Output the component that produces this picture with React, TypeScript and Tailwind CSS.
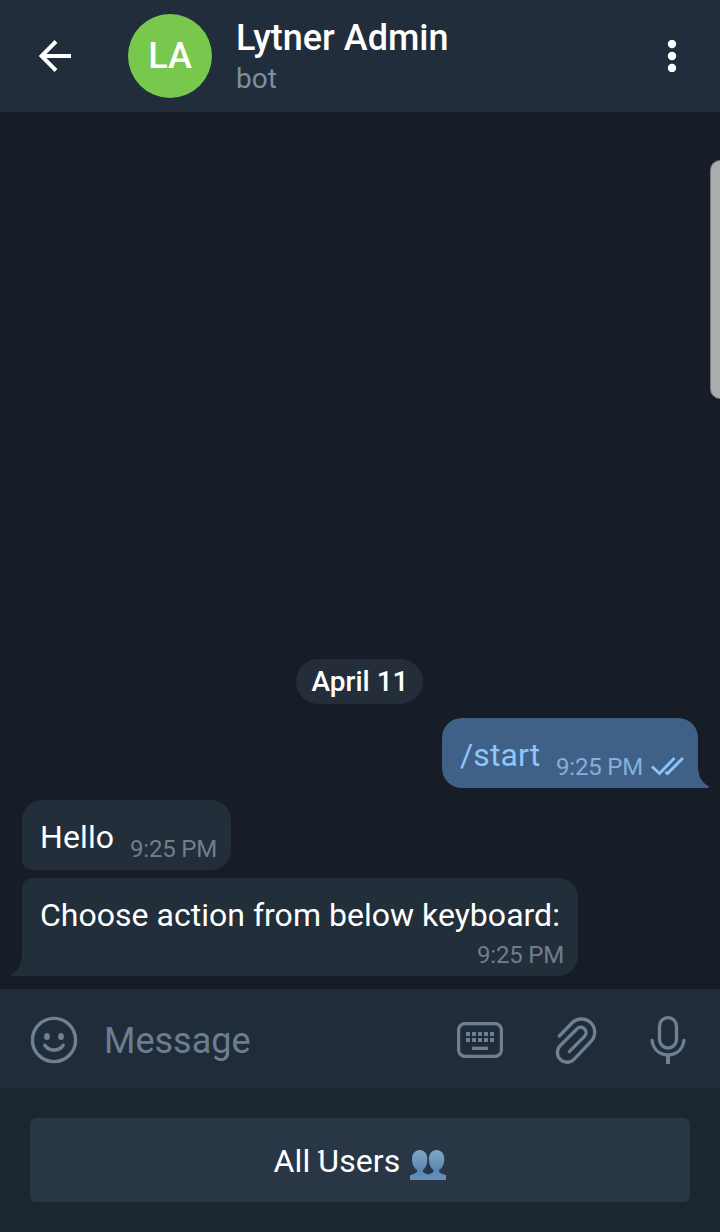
import React from "react";

function BackIcon() {
  return (
    <svg className="block h-8 w-8" viewBox="0 0 32 32" fill="none" stroke="#fff" strokeWidth="4">
      <path d="M32 16H3M17 1.5L2.5 16L17 30.5" />
    </svg>
  );
}

function SmileIcon() {
  return (
    <svg className="-mt-px block h-12 w-12 shrink-0" viewBox="0 0 48 48" fill="none" stroke="#6f8094" strokeWidth="3.4">
      <circle cx="24" cy="24" r="21.6" />
      <path d="M14.8 29.2C19.2 35.6 28.8 35.6 33.2 29.2" strokeLinecap="round" />
      <ellipse cx="17" cy="20.5" rx="2.9" ry="3.5" fill="#6f8094" stroke="none" />
      <ellipse cx="31" cy="20.5" rx="2.9" ry="3.5" fill="#6f8094" stroke="none" />
    </svg>
  );
}

function KeyboardIcon() {
  const cols = [9, 15, 21, 27, 33];
  return (
    <svg className="block h-9 w-[46px] shrink-0" viewBox="0 0 46 36" fill="#6f8094">
      <rect x="1.6" y="1.6" width="42.8" height="32.8" rx="6.5" fill="none" stroke="#6f8094" strokeWidth="3.2" />
      {cols.map((x) => (
        <g key={x}>
          <rect x={x} y="10" width="4" height="4" />
          <rect x={x} y="16" width="4" height="4" />
        </g>
      ))}
      <rect x="15" y="24.7" width="16" height="3.3" />
    </svg>
  );
}

function ClipIcon() {
  return (
    <svg className="-mt-px block h-12 w-[42px] shrink-0" viewBox="0 0 126 144" fill="none" stroke="#6f8094" strokeWidth="10">
      <path d="M13 60L51 21A39 39 0 0 1 108 76L57 130A29 29 0 0 1 15.5 89L66 38.5A15.5 15.5 0 0 1 88.500 61L43 107" strokeLinecap="round" />
    </svg>
  );
}

function MicIcon() {
  return (
    <svg className="block h-12 w-9 shrink-0" viewBox="0 0 36 48" fill="none" stroke="#6f8094" strokeWidth="3.3">
      <rect x="9.5" y="1.7" width="17" height="30.300" rx="8.5" />
      <path d="M2 24.5C3.5 34 10 38.8 18 38.8S32.500 34 34 24.500" strokeLinecap="round" />
      <path d="M18 39V48" strokeWidth="4" />
    </svg>
  );
}

function PeopleIcon() {
  const bust =
    "M0 30V25.500C3 23.800 7 23.500 7.500 20.500C4 18 2 14.500 2 9C2 3.500 5.200 0 9.700 0S17.400 3.500 17.400 9C17.400 14.500 15.500 18 12.500 20.500C13 23.500 17 23.800 21 25.500V30Z";
  return (
    <svg className="block h-[30px] w-9" viewBox="0 0 36 30">
      <defs>
        <linearGradient id="bust" x1="0" y1="0" x2="0" y2="1">
          <stop offset="0" stopColor="#82a8c8" />
          <stop offset="0.65" stopColor="#5b88b2" />
          <stop offset="1" stopColor="#6590bb" />
        </linearGradient>
      </defs>
      <path d={bust} fill="url(#bust)" />
      <path d={bust} fill="url(#bust)" transform="translate(36.300 0) scale(-1 1)" />
    </svg>
  );
}

function Time({ className }: { className: string }) {
  return <span className={`whitespace-nowrap text-[24px] leading-7 tracking-[-0.2px] ${className}`}>9:25 PM</span>;
}

export default function App() {
  return (
    <div className="relative flex h-[1232px] w-[720px] flex-col overflow-hidden bg-[#161d26] font-[Roboto,sans-serif] text-white">
      <header className="flex h-28 shrink-0 items-center bg-[#212d3a] pl-[39px] pr-[42px]">
        <BackIcon />
        <div className="ml-[57px] flex h-[84px] w-[84px] items-center justify-center rounded-full bg-[#77c84d] text-[36px] font-medium leading-10">
          LA
        </div>
        <div className="ml-6 flex flex-1 flex-col pt-0.5">
          <h1 className="text-[36px] font-medium leading-[42px]">Lytner Admin</h1>
          <p className="pt-px text-[28px] leading-[37px] text-[#7f8e9d]">bot</p>
        </div>
        <svg className="block h-8 w-3" viewBox="0 0 12 32" fill="#fff">
          <circle cx="6" cy="4" r="4.200" />
          <circle cx="6" cy="16" r="4.200" />
          <circle cx="6" cy="28" r="4.200" />
        </svg>
      </header>

      <main className="flex flex-1 flex-col justify-end pb-[13px]">
        <div className="mb-3.5 mr-px flex h-[45px] w-[127px] items-center justify-center self-center rounded-full bg-[#242e3a] pl-px text-[28px] font-medium leading-8">
          April 11
        </div>

        <div className="relative mr-[22px] flex h-[70px] w-64 justify-between self-end rounded-[20px] rounded-br-none bg-[#406187] pl-[18px] pr-3.5">
          <span className="pt-[19px] text-[32px] leading-9 tracking-[0.1px] text-[#8fc5fa]">/start</span>
          <div className="flex pt-[35px]">
            <Time className="text-[#83afd9]" />
            <svg className="ml-2 mt-[3px] block h-5 w-[33px]" viewBox="0 0 33 20" fill="none" stroke="#89c4fa" strokeWidth="2.900">
              <path d="M1 10.500L8.500 17.500L23.500 2M14.500 16L16.500 17.500L32 2" />
            </svg>
          </div>
          <svg className="absolute bottom-0 left-full h-5 w-[11px]" viewBox="0 0 11 20">
            <path d="M0 0C.4 8 4 15 10.500 18Q11.500 20 9 20H0Z" fill="#406187" />
          </svg>
        </div>

        <div className="ml-[22px] mt-3 flex h-[70px] w-[209px] justify-between rounded-[20px] rounded-bl-[10px] bg-[#222e3a] pl-[18px] pr-3.5">
          <span className="pt-[19px] text-[32px] leading-9 tracking-[0.1px]">Hello</span>
          <Time className="pt-[35px] text-[#707e8c]" />
        </div>

        <div className="relative ml-[22px] mt-2 flex h-[98px] w-[556px] flex-col rounded-[20px] rounded-bl-none rounded-tl-[10px] bg-[#222e3a] pl-[18px] pr-3.5 pt-[19px]">
          <span className="whitespace-nowrap text-[32px] leading-9 tracking-[0.02px]">Choose action from below keyboard:</span>
          <Time className="mt-2 self-end text-[#707e8c]" />
          <svg className="absolute bottom-0 right-full h-5 w-[11px]" viewBox="0 0 11 20">
            <path d="M11 0C10.600 8 7 15 .5 18Q-.5 20 2 20H11Z" fill="#222e3a" />
          </svg>
        </div>
      </main>

      <div className="flex h-[99px] shrink-0 items-center bg-[#212c3a] pb-px pl-[30px] pr-[34px] pt-1">
        <SmileIcon />
        <span className="ml-[26px] flex-1 pt-0.5 text-[36px] leading-10 text-[#6b7e91]">Message</span>
        <KeyboardIcon />
        <div className="ml-[52px]">
          <ClipIcon />
        </div>
        <div className="ml-[53px]">
          <MicIcon />
        </div>
      </div>

      <footer className="h-36 shrink-0 bg-[#1c2631] p-[30px]">
        <button className="flex h-[84px] w-full items-center justify-center rounded-md bg-[#293645] pt-0.5 text-[32px] leading-9 tracking-[0.1px]">
          <span className="relative">
            All Users
            <span className="absolute left-[44px] top-2 h-0.5 w-[5px] bg-white/80" />
          </span>
          <span className="ml-2.5 mt-2">
            <PeopleIcon />
          </span>
        </button>
      </footer>

      <div className="absolute left-[710px] top-40 h-[239px] w-5 rounded-[12px] border border-[#777b7d] bg-[#a9adae]" />
    </div>
  );
}
